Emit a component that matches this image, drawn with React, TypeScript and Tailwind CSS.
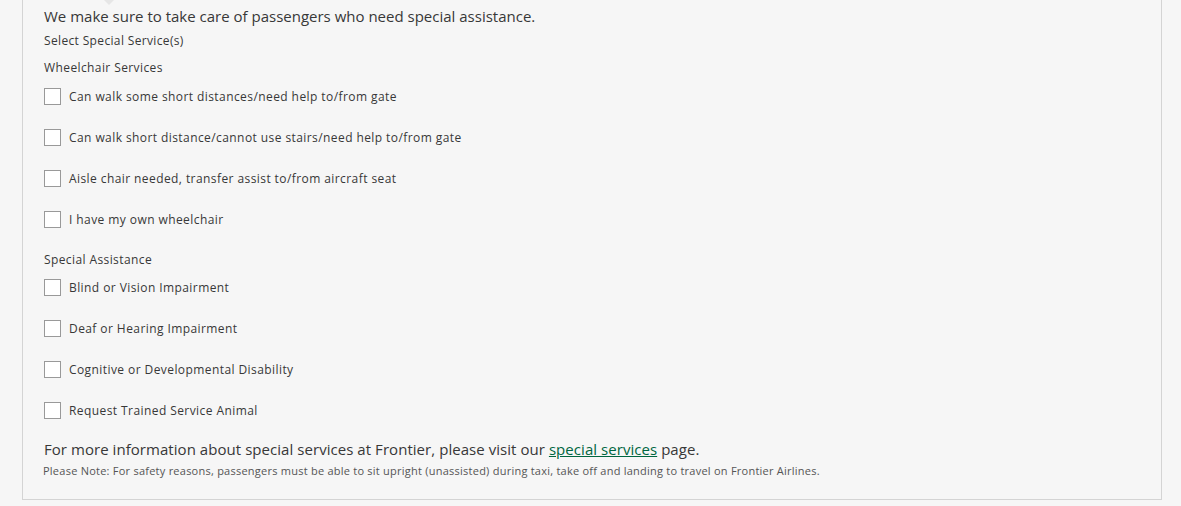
import React from "react";

const wheel = [
  "Can walk some short distances/need help to/from gate",
  "Can walk short distance/cannot use stairs/need help to/from gate",
  "Aisle chair needed, transfer assist to/from aircraft seat",
  "I have my own wheelchair",
];
const special = [
  "Blind or Vision Impairment",
  "Deaf or Hearing Impairment",
  "Cognitive or Developmental Disability",
  "Request Trained Service Animal",
];

function Row({ label }: { label: string }) {
  return (
    <label className="flex items-center h-[17px] gap-[8px]">
      <span className="block w-[17px] h-[17px] shrink-0 bg-white border border-[#999999]" />
      <span className="text-[12px] leading-[17px] tracking-[0.42px] text-[#383838]">{label}</span>
    </label>
  );
}

export default function App() {
  return (
    <div
      className="w-full h-[506px] bg-[#f6f6f6] relative"
      style={{ fontFamily: '"Open Sans", "Liberation Sans", sans-serif' }}
    >
      <svg className="absolute left-[104px] top-0" width="10" height="5" viewBox="0 0 10 5">
        <path d="M0 0 L10 0 L5 5 Z" fill="#e6e6e6" />
      </svg>
      <div className="ml-[22px] w-[1140px] border-x border-b border-[#d4d4d4] pl-[21px] pt-[6px] pb-[20px]">
        <div className="text-[15px] leading-[20px] text-[#383838]">
          We make sure to take care of passengers who need special assistance.
        </div>
        <div className="mt-[6px] text-[12px] leading-[18px] tracking-[0.35px] text-[#383838]">Select Special Service(s)</div>
        <div className="mt-[9px] text-[12px] leading-[18px] tracking-[0.4px] text-[#383838]">Wheelchair Services</div>
        <div className="mt-[11px] flex flex-col gap-[24px]">
          {wheel.map((l) => (
            <Row key={l} label={l} />
          ))}
        </div>
        <div className="mt-[23px] text-[12px] leading-[18px] tracking-[0.4px] text-[#383838]">Special Assistance</div>
        <div className="mt-[10px] flex flex-col gap-[24px]">
          {special.map((l) => (
            <Row key={l} label={l} />
          ))}
        </div>
        <div className="mt-[20px] text-[15px] leading-[20px] tracking-[0.05px] text-[#383838]">
          For more information about special services at Frontier, please visit our{" "}
          <a href="#" className="text-[#00663f] underline">special services</a> page.
        </div>
        <div className="mt-[4px] text-[11px] leading-[16px] tracking-[0.24px] text-[#555555] -ml-px">
          Please Note: For safety reasons, passengers must be able to sit upright (unassisted) during taxi, take off and landing to travel on Frontier Airlines.
        </div>
      </div>
    </div>
  );
}
